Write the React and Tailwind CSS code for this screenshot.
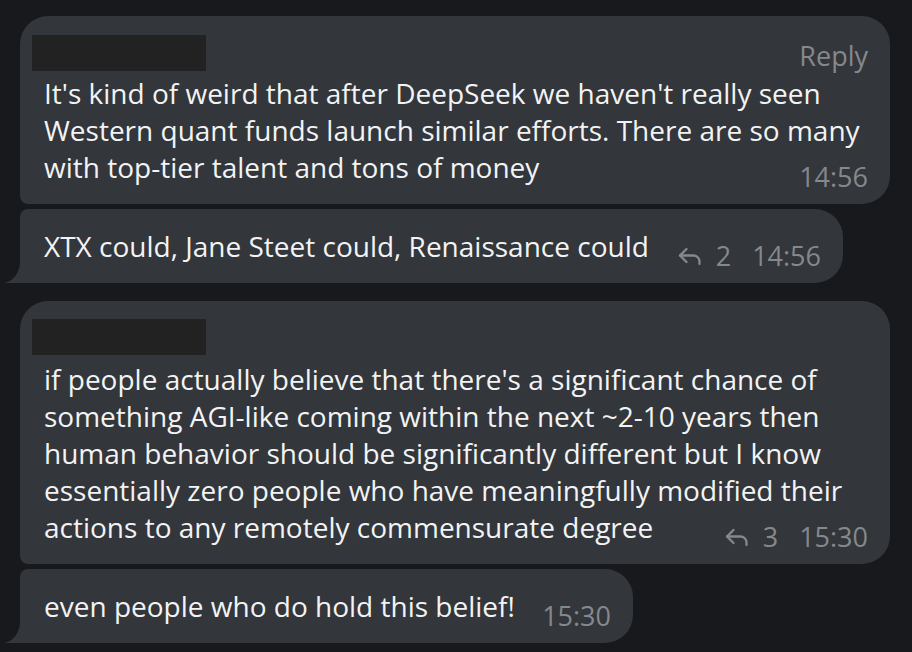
import React from "react";

const FONT = { fontFamily: '"Open Sans", "Noto Sans", sans-serif' };

const MESSAGES = [
  {
    id: 1,
    header: true,
    replyLabel: true,
    lines: [
      "It's kind of weird that after DeepSeek we haven't really seen",
      "Western quant funds launch similar efforts. There are so many",
      "with top-tier talent and tons of money",
    ],
    time: "14:56",
    width: "w-[870px]",
    corners: "rounded-tl-[28px] rounded-tr-[28px] rounded-br-[28px] rounded-bl-[8px]",
    gap: "mt-[4px]",
    tail: false,
  },
  {
    id: 2,
    lines: ["XTX could, Jane Steet could, Renaissance could"],
    replies: 2,
    time: "14:56",
    width: "w-[823px]",
    corners: "rounded-tl-[8px] rounded-tr-[28px] rounded-br-[28px] rounded-bl-none",
    tail: true,
  },
  {
    id: 3,
    header: true,
    lines: [
      "if people actually believe that there's a significant chance of",
      "something AGI-like coming within the next ~2-10 years then",
      "human behavior should be significantly different but I know",
      "essentially zero people who have meaningfully modified their",
      "actions to any remotely commensurate degree",
    ],
    replies: 3,
    time: "15:30",
    width: "w-[870px]",
    corners: "rounded-tl-[28px] rounded-tr-[28px] rounded-br-[28px] rounded-bl-[8px]",
    gap: "mt-[6px]",
    tail: false,
  },
  {
    id: 4,
    lines: ["even people who do hold this belief!"],
    time: "15:30",
    width: "w-[613px]",
    corners: "rounded-tl-[8px] rounded-tr-[28px] rounded-br-[28px] rounded-bl-none",
    tail: true,
  },
];

function ReplyArrow() {
  return (
    <svg width="24" height="19" viewBox="0 0 24 19" fill="none" stroke="currentColor" strokeWidth="2.3" strokeLinecap="round" strokeLinejoin="round">
      <polyline points="8.5 2 2 8.5 8.5 15" />
      <path d="M2 8.5h13.5a6 6 0 0 1 6 6V17" />
    </svg>
  );
}

function Tail() {
  return (
    <svg width="15" height="22" viewBox="0 0 15 22" className="block shrink-0">
      <path d="M15 0C15 11 9 19.5 0.5 21.6 0 21.8 0 22 0.8 22H15Z" fill="#33363a" />
    </svg>
  );
}

function Meta({ replies, time }) {
  return (
    <div className="ml-auto flex shrink-0 translate-y-[9px] items-center pl-4 text-[27px] leading-[37px] text-[#85888c]">
      {replies && (
        <>
          <span className="mr-[14px] mt-[2px]"><ReplyArrow /></span>
          <span className="mr-[21px]">{replies}</span>
        </>
      )}
      <span>{time}</span>
    </div>
  );
}

function Bubble({ m }) {
  const head = m.lines.slice(0, -1);
  const last = m.lines[m.lines.length - 1];

  return (
    <div className="flex items-end">
      <div className="w-[15px] shrink-0">{m.tail && <Tail />}</div>
      <div className={`${m.width} ${m.corners} bg-[#33363a] pb-[18px] pl-[12px] pr-[22px] ${m.tail ? "pt-[19px]" : "pt-[18px]"}`}>
        {m.header && (
          <div className="flex items-end justify-between">
            <div className="h-[36px] w-[174px] bg-[#222222]" />
            {m.replyLabel && (
              <span className="translate-y-[3px] text-[27px] leading-[37px] text-[#85888c]">Reply</span>
            )}
          </div>
        )}
        <div className={`pl-[12px] text-[28px] leading-[37px] text-[#f2f3f4] ${m.gap ?? ""}`}>
          {head.map((l) => (
            <div key={l} className="whitespace-nowrap">{l}</div>
          ))}
          <div className="flex items-end">
            <span className="whitespace-nowrap">{last}</span>
            <Meta replies={m.replies} time={m.time} />
          </div>
        </div>
      </div>
    </div>
  );
}

export default function App() {
  return (
    <div style={FONT} className="h-[652px] w-[912px] overflow-hidden bg-[#18191d] pl-[5px] pt-[16px]">
      <div className="flex flex-col">
        <Bubble m={MESSAGES[0]} />
        <div className="mt-[5px]"><Bubble m={MESSAGES[1]} /></div>
        <div className="mt-[18px]"><Bubble m={MESSAGES[2]} /></div>
        <div className="mt-[5px]"><Bubble m={MESSAGES[3]} /></div>
      </div>
    </div>
  );
}
